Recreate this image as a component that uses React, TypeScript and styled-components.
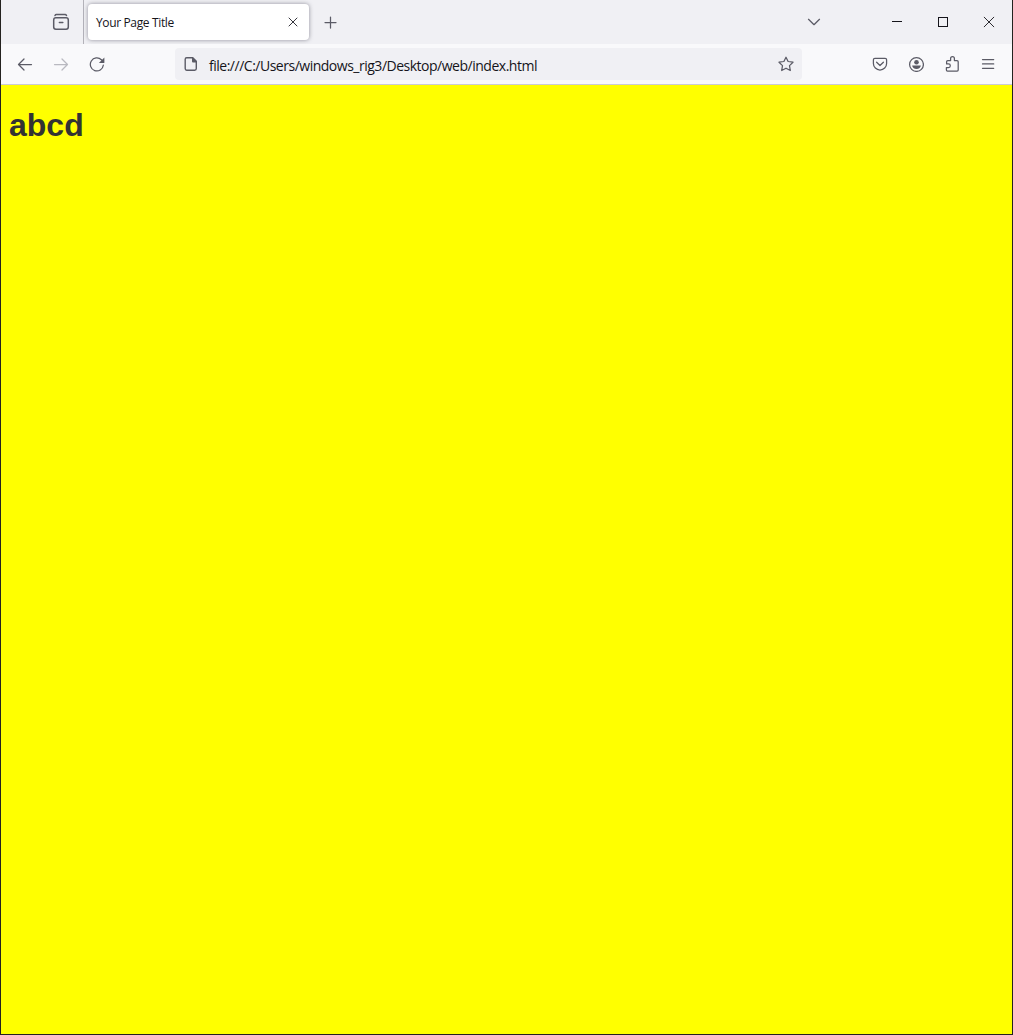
import React from "react";
import styled, { createGlobalStyle } from "styled-components";

const GlobalStyle = createGlobalStyle`
  * { box-sizing: border-box; }
  html, body { margin: 0; padding: 0; background: #211f1d; }
`;

const Window = styled.div`
  display: flex;
  flex-direction: column;
  width: 1013px;
  height: 1035px;
  border: solid #24221f;
  border-width: 0 1px 1px 1px;
  font-family: "Open Sans", "Noto Sans", sans-serif;
  color: #15141a;
  overflow: hidden;
`;

const TabStrip = styled.header`
  display: flex;
  flex: none;
  height: 44px;
  background: #f0f0f4;
`;

const FirefoxView = styled.div`
  display: flex;
  align-items: center;
  justify-content: flex-end;
  width: 83px;
  padding-right: 10px;
  border-right: 1px solid #b3b2b9;
`;

const Tab = styled.div`
  display: flex;
  align-items: center;
  justify-content: space-between;
  width: 221px;
  height: 36px;
  margin: 4px 0 0 4px;
  padding: 0 4px 0 8px;
  border-radius: 4px;
  background: #fff;
  box-shadow: 0 0 4px rgba(90, 88, 105, 0.65);
`;

const TabTitle = styled.span`
  padding-top: 2px;
  font-size: 12px;
  line-height: 16px;
  letter-spacing: -0.36px;
  white-space: nowrap;
`;

const IconButton = styled.span<{ $w: number; $color?: string }>`
  display: flex;
  flex: none;
  align-items: center;
  justify-content: center;
  width: ${(p) => p.$w}px;
  height: 100%;
  color: ${(p) => p.$color ?? "#5b5b66"};

  svg {
    display: block;
    flex: none;
  }
`;

const Spacer = styled.div<{ $w?: number }>`
  flex: ${(p) => (p.$w ? `0 0 ${p.$w}px` : "1")};
`;

const NavBar = styled.nav`
  display: flex;
  flex: none;
  height: 41px;
  padding: 0 6px;
  background: #f9f9fb;
  border-bottom: 1px solid #cbcbd6;
`;

const UrlBar = styled.div`
  display: flex;
  align-items: center;
  width: 627px;
  height: 32px;
  margin: 4px 0 0 60px;
  border-radius: 4px;
  background: #f0f0f4;
`;

const UrlText = styled.span`
  flex: 1;
  padding: 3px 0 0 2px;
  font-size: 14px;
  line-height: 20px;
  letter-spacing: -0.49px;
  white-space: nowrap;
`;

const Page = styled.main`
  flex: 1;
  padding: 0 8px;
  background: #ffff00;
`;

const Heading = styled.h1`
  margin: 22px 0 0;
  color: #333;
  font: bold 32px/37px "Liberation Sans", Arial, sans-serif;
`;

type IconProps = { children: React.ReactNode; size?: number; stroke?: number; crisp?: boolean };

const Icon = ({ children, size = 16, stroke = 1.25, crisp }: IconProps) => (
  <svg
    width={size}
    height={size}
    viewBox={`0 0 ${size} ${size}`}
    fill="none"
    stroke="currentColor"
    strokeWidth={stroke}
    strokeLinecap={crisp ? "butt" : "round"}
    strokeLinejoin={crisp ? "miter" : "round"}
    shapeRendering={crisp ? "crispEdges" : undefined}
  >
    {children}
  </svg>
);

export default function App() {
  return (
    <>
      <GlobalStyle />
      <Window>
        <TabStrip>
          <FirefoxView>
            <IconButton $w={24}>
              <Icon size={18} stroke={1.5}>
                <path d="M3 2.5c.3-.6.8-.9 1.4-.9h8.7c.6 0 1.1.3 1.4.9" />
                <rect x="1.7" y="4.7" width="14.6" height="11.6" rx="2.2" />
                <path d="M7.4 9.4h3.4" />
              </Icon>
            </IconButton>
          </FirefoxView>
          <Tab>
            <TabTitle>Your Page Title</TabTitle>
            <IconButton $w={24} $color="#2b2a33">
              <Icon stroke={0.95}>
                <path d="M4 4l8 8M12 4l-8 8" />
              </Icon>
            </IconButton>
          </Tab>
          <Spacer $w={9} />
          <IconButton $w={24}>
            <Icon>
              <path d="M8.5 3v11M3 8.5h11" />
            </Icon>
          </IconButton>
          <Spacer />
          <IconButton $w={36}>
            <Icon>
              <path d="M2.5 5.3L8 10.7l5.5-5.4" />
            </Icon>
          </IconButton>
          <Spacer $w={42} />
          <IconButton $w={46} $color="#15141a">
            <Icon size={12} stroke={1} crisp>
              <path d="M1 5.5h10" />
            </Icon>
          </IconButton>
          <IconButton $w={46} $color="#15141a">
            <Icon size={12} stroke={1} crisp>
              <rect x="1.5" y="1.5" width="9" height="9" />
            </Icon>
          </IconButton>
          <IconButton $w={46} $color="#15141a">
            <Icon size={12} stroke={0.9}>
              <path d="M1.2 1.2l9.6 9.6M10.8 1.2L1.2 10.8" />
            </Icon>
          </IconButton>
        </TabStrip>
        <NavBar>
          <IconButton $w={36}>
            <Icon>
              <path d="M14.5 8.5h-13M7 3L1.5 8.5 7 14" />
            </Icon>
          </IconButton>
          <IconButton $w={36} $color="#b9b9c0">
            <Icon>
              <path d="M1.5 8.5h13M9 3l5.5 5.5L9 14" />
            </Icon>
          </IconButton>
          <IconButton $w={36}>
            <Icon>
              <path d="M14.3 9.2a6.5 6.5 0 1 1-1.9-5.4l.8.8" />
              <path d="M15.4 1.6v4.9c0 .4-.2.6-.6.6H9.9z" fill="currentColor" stroke="none" />
            </Icon>
          </IconButton>
          <UrlBar>
            <IconButton $w={32}>
              <Icon stroke={1.4}>
                <path d="M3.7 1.7h6.1l3.5 3.5v7.4c0 .9-.6 1.7-1.6 1.7h-8c-1 0-1.5-.8-1.5-1.7V3.2c0-.9.6-1.5 1.5-1.5z" />
                <path d="M9 1.7h1l3.5 3.5v1.3H10a1 1 0 0 1-1-1z" fill="currentColor" stroke="none" />
              </Icon>
            </IconButton>
            <UrlText>file:///C:/Users/windows_rig3/Desktop/web/index.html</UrlText>
            <IconButton $w={32}>
              <Icon>
                <path d="M8 1.2l2.1 4.3 4.9.7-3.5 3.4.8 4.9L8 12.2l-4.3 2.3.8-4.9L1 6.2l4.9-.7z" />
              </Icon>
            </IconButton>
          </UrlBar>
          <Spacer />
          <IconButton $w={36}>
            <Icon>
              <path d="M2.9 2.3h10.2c.9 0 1.5.6 1.5 1.5v3.6a6.6 6.6 0 0 1-13.2 0V3.8c0-.9.6-1.5 1.5-1.5z" />
              <path d="M4.6 6.2L8 9.5l3.4-3.3" />
            </Icon>
          </IconButton>
          <IconButton $w={36}>
            <Icon>
              <circle cx="8.5" cy="8.5" r="6.9" />
              <circle cx="8.5" cy="6.2" r="2.3" fill="currentColor" stroke="none" />
              <path d="M4.2 9.5h8.6c0 2-1.9 3.4-4.3 3.4s-4.3-1.4-4.3-3.4z" fill="currentColor" stroke="none" />
            </Icon>
          </IconButton>
          <IconButton $w={36}>
            <Icon>
              <path d="M3.5 15.2h9.6c.6 0 1.1-.5 1.1-1.1V5.7c0-.6-.5-1.1-1.1-1.1h-2.7V2.6a1.9 1.9 0 0 0-3.8 0v2H3.7c-.6 0-1.1.5-1.1 1.1v2.2h1.9a1.8 1.8 0 0 1 0 3.6H2.4v2.6c0 .6.5 1.1 1.1 1.1z" />
            </Icon>
          </IconButton>
          <IconButton $w={36}>
            <Icon>
              <path d="M2.5 3.5h11.2M2.5 7.9h11.2M2.5 12.3h11.2" />
            </Icon>
          </IconButton>
        </NavBar>
        <Page>
          <Heading>abcd</Heading>
        </Page>
      </Window>
    </>
  );
}
